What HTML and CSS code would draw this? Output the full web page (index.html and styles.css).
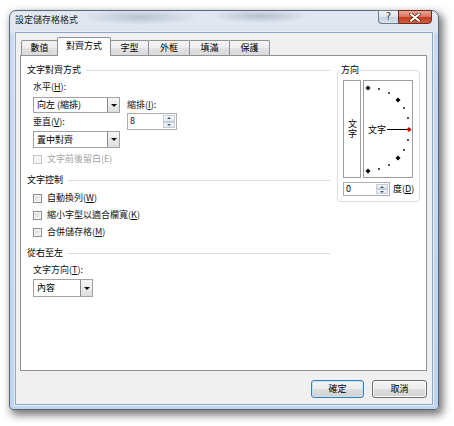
FILE: index.html
```html
<!DOCTYPE html>
<html lang="zh-Hant">
<head>
<meta charset="utf-8">
<title>設定儲存格格式</title>
<link rel="stylesheet" href="styles.css">
</head>
<body>
<div class="window">
  <div class="titlebar">
    <div class="title">設定儲存格格式</div>
    <div class="caption">
      <div class="cap help">?</div>
      <div class="cap close"><svg width="12" height="9" viewBox="0 0 12 9"><path d="M2 1.2 L10 7.8 M10 1.2 L2 7.8" stroke="#5a2418" stroke-width="3.4" stroke-linecap="round"/><path d="M2 1.2 L10 7.8 M10 1.2 L2 7.8" stroke="#fff" stroke-width="2" stroke-linecap="round"/></svg></div>
    </div>
  </div>
  <div class="client">
    <div class="tabs">
      <div class="tab t1">數值</div>
      <div class="tab sel">對齊方式</div>
      <div class="tab t3">字型</div>
      <div class="tab t4">外框</div>
      <div class="tab t5">填滿</div>
      <div class="tab t6">保護</div>
    </div>
    <div class="panel">
      <div class="left">
        <div class="group-title"><span>文字對齊方式</span><i class="rule"></i></div>
        <div class="align-row">
          <div class="align-col">
            <div class="label">水平(<u>H</u>):</div>
            <div class="combo c1"><span class="ctext">向左 (縮排)</span><span class="drop"></span></div>
            <div class="label l2">垂直(<u>V</u>):</div>
            <div class="combo c2"><span class="ctext">置中對齊</span><span class="drop"></span></div>
          </div>
          <div class="indent-col">
            <div class="label">縮排(<u>I</u>):</div>
            <div class="spin sp-indent"><span class="sval">8</span><span class="spbtns"><i class="up"></i><i class="down"></i></span></div>
          </div>
        </div>
        <div class="check disabled first"><i class="box"></i>文字前後留白(E)</div>

        <div class="group-title sec"><span>文字控制</span><i class="rule"></i></div>
        <div class="check c-a"><i class="box"></i>自動換列(<u>W</u>)</div>
        <div class="check"><i class="box"></i>縮小字型以適合欄寬(<u>K</u>)</div>
        <div class="check"><i class="box"></i>合併儲存格(<u>M</u>)</div>

        <div class="group-title sec"><span>從右至左</span><i class="rule"></i></div>
        <div class="label dir-label">文字方向(<u>T</u>):</div>
        <div class="combo c3"><span class="ctext">內容</span><span class="drop"></span></div>
      </div>

      <fieldset class="orient">
        <legend>方向</legend>
        <div class="orient-row">
          <div class="vbox"><span class="vtext">文字</span></div>
          <div class="dial">
            <svg width="48" height="96" viewBox="0 0 48 96">
              <polygon points="4,4.5 6.5,7 4,9.5 1.5,7" fill="#000"/>
              <circle cx="15" cy="8" r="0.9" fill="#000"/>
              <circle cx="25" cy="12" r="0.9" fill="#000"/>
              <polygon points="34,16.5 36.5,19 34,21.5 31.5,19" fill="#000"/>
              <circle cx="40" cy="27" r="0.9" fill="#000"/>
              <circle cx="44" cy="37" r="0.9" fill="#000"/>
              <text x="4" y="52" font-size="9" font-family="Noto Sans CJK TC, sans-serif" fill="#000">文字</text>
              <line x1="23" y1="48.5" x2="43" y2="48.5" stroke="#000" stroke-width="1"/>
              <polygon points="45,46 47.5,48.5 45,51 42.5,48.5" fill="#c80000"/>
              <circle cx="44" cy="59" r="0.9" fill="#000"/>
              <circle cx="40" cy="69" r="0.9" fill="#000"/>
              <polygon points="34,74.5 36.5,77 34,79.5 31.5,77" fill="#000"/>
              <circle cx="25" cy="84" r="0.9" fill="#000"/>
              <circle cx="15" cy="88" r="0.9" fill="#000"/>
              <polygon points="4,87.5 6.5,90 4,92.5 1.5,90" fill="#000"/>
            </svg>
          </div>
        </div>
        <div class="deg-row">
          <div class="spin sp-deg"><span class="sval">0</span><span class="spbtns"><i class="up"></i><i class="down"></i></span></div>
          <span class="deg">度(<u>D</u>)</span>
        </div>
      </fieldset>
    </div>
    <div class="buttons">
      <div class="btn ok">確定</div>
      <div class="btn cancel">取消</div>
    </div>
  </div>
</div>
</body>
</html>
```
FILE: styles.css
```css
html, body {
  margin: 0;
  padding: 0;
  background: #ffffff;
}
body {
  font-family: "Noto Sans CJK TC", "Noto Sans CJK SC", sans-serif;
  font-size: 9px;
  color: #000;
  width: 454px;
  height: 426px;
  overflow: hidden;
}
u { text-decoration: underline; text-underline-offset: 1px; }

.window {
  width: 430px;
  height: 400px;
  margin: 10px 0 0 9px;
  box-sizing: border-box;
  border: 1px solid #59677a;
  border-radius: 7px 7px 4px 4px;
  padding: 0 5px 4px 5px;
  background:
    radial-gradient(ellipse 60px 8px at 130px 6px, rgba(110,125,150,.35), rgba(110,125,150,0)),
    radial-gradient(ellipse 50px 7px at 250px 5px, rgba(100,115,140,.35), rgba(100,115,140,0)),
    linear-gradient(#e2e8f0 0, #dde5ef 21px, #c9dbf1 23px, #bfd4ee 100%);
  box-shadow: 3px 4px 8px 1px rgba(0,0,0,.55);
  display: flex;
  flex-direction: column;
}

.titlebar {
  height: 21px;
  display: flex;
  justify-content: space-between;
  align-items: flex-start;
  flex: none;
}
.title {
  padding-top: 3px;
  line-height: 12px;
  color: #1a1a1a;
}
.caption {
  display: flex;
  margin-top: -1px;
  margin-right: 1px;
}
.cap {
  height: 14px;
  box-sizing: border-box;
  display: flex;
  align-items: center;
  justify-content: center;
}
.help {
  width: 20px;
  border: 1px solid #6f7b8c;
  border-right: none;
  border-radius: 0 0 0 4px;
  background: linear-gradient(#eef2f7 0, #dfe5ed 50%, #c9d2de 50%, #d8e0ea 100%);
  color: #3a3f48;
  font-family: "DejaVu Sans", sans-serif;
  font-size: 10px;
  line-height: 12px;
}
.close {
  width: 34px;
  border: 1px solid #6e2a1d;
  border-radius: 0 0 4px 0;
  background: linear-gradient(#eaa696 0, #d8735c 48%, #c23b1f 52%, #d35c40 100%);
}

.client {
  flex: 1;
  background: #f0f0f0;
  border: 1px solid #8aa6c9;
  box-shadow: 0 0 0 1px #e6effa;
  padding: 4px 5px 0 4px;
  display: flex;
  flex-direction: column;
}

.tabs {
  display: flex;
  align-items: flex-end;
  height: 18px;
  padding-left: 1px;
  position: relative;
  z-index: 1;
  flex: none;
}
.tab {
  height: 15px;
  box-sizing: border-box;
  border: 1px solid #8e9199;
  border-bottom: none;
  margin-left: -1px;
  background: linear-gradient(#f5f5f5 0, #ececec 50%, #e2e2e2 51%, #dadada 100%);
  text-align: center;
  line-height: 14px;
  border-radius: 2px 2px 0 0;
}
.tab.t1 { margin-left: 0; width: 37px; }
.tab.sel {
  width: 54px;
  height: 19px;
  margin-bottom: -1px;
  background: #fff;
  line-height: 16px;
  position: relative;
  z-index: 2;
}
.tab.t3 { width: 39px; }
.tab.t4 { width: 42px; }
.tab.t5 { width: 41px; }
.tab.t6 { width: 41px; }

.panel {
  width: 407px;
  height: 316px;
  box-sizing: border-box;
  background: #fff;
  border: 1px solid #8e9199;
  display: flex;
  align-items: flex-start;
  padding: 8px 0 0 6px;
  flex: none;
}

.left {
  width: 303px;
  display: flex;
  flex-direction: column;
}
.group-title {
  display: flex;
  align-items: center;
  height: 12px;
  line-height: 12px;
}
.group-title.sec { margin-top: 9px; }
.rule {
  flex: 1;
  height: 1px;
  background: #d5dfe5;
  margin-left: 5px;
}
.label {
  height: 12px;
  line-height: 12px;
  color: #111;
}
.align-row {
  display: flex;
  margin-top: 5px;
  padding-left: 6px;
  gap: 7px;
}
.align-col {
  width: 87px;
  display: flex;
  flex-direction: column;
}
.indent-col {
  margin-top: 18px;
  display: flex;
  flex-direction: column;
}

.combo {
  display: flex;
  box-sizing: border-box;
  border: 1px solid #a2a2a2;
  background: #fff;
}
.combo .ctext {
  flex: 1;
  padding-left: 3px;
  line-height: 14px;
  white-space: nowrap;
  overflow: hidden;
}
.combo.c1 { margin-top: 4px; height: 16px; }
.label.l2 { margin-top: 3px; }
.combo.c2 { margin-top: 3px; height: 17px; }
.combo.c2 .ctext, .combo.c3 .ctext { line-height: 15px; }
.combo.c3 { margin: 3px 0 0 6px; width: 60px; height: 18px; }
.drop {
  width: 11px;
  border-left: 1px solid #8a8a8a;
  background: linear-gradient(#f6f6f6, #dedede);
  display: flex;
  align-items: center;
  justify-content: center;
}
.drop::after {
  content: "";
  width: 0;
  height: 0;
  border-left: 3px solid transparent;
  border-right: 3px solid transparent;
  border-top: 3px solid #111;
}

.spin {
  display: flex;
  box-sizing: border-box;
  border: 1px solid #abadb3;
  background: #fff;
  flex: none;
}
.sp-indent { margin-top: 2px; width: 50px; height: 17px; }
.sp-deg { width: 47px; height: 14px; }
.sval {
  flex: 1;
  padding-left: 2px;
  line-height: 14px;
}
.sp-deg .sval { line-height: 12px; }
.spbtns {
  width: 12px;
  display: flex;
  flex-direction: column;
  padding: 1px 1px 1px 0;
}
.spbtns i {
  flex: 1;
  box-sizing: border-box;
  border: 1px solid #c6ccd6;
  background: linear-gradient(#f8fafd, #dfe6ef);
  display: flex;
  align-items: center;
  justify-content: center;
}
.spbtns i.up::after {
  content: "";
  border-left: 2px solid transparent;
  border-right: 2px solid transparent;
  border-bottom: 2px solid #3d5a86;
}
.spbtns i.down::after {
  content: "";
  border-left: 2px solid transparent;
  border-right: 2px solid transparent;
  border-top: 2px solid #3d5a86;
}

.check {
  display: flex;
  align-items: center;
  height: 12px;
  line-height: 12px;
  padding-left: 6px;
  margin-top: 5px;
  color: #111;
}
.check.first { margin-top: 5px; }
.check.c-a { margin-top: 6px; }
.check .box {
  width: 9px;
  height: 9px;
  box-sizing: border-box;
  border: 1px solid #8e8f8f;
  background: linear-gradient(135deg, #d8d8d8, #f7f7f7);
  box-shadow: inset 0 0 0 1px #f4f4f4;
  margin-right: 5px;
}
.check.disabled { color: #a3a3a3; }
.check.disabled .box {
  border-color: #c6c6c6;
  background: #f4f4f4;
}
.dir-label { margin-top: 5px; padding-left: 6px; }

.orient {
  margin: 0 0 0 7px;
  width: 83px;
  height: 138px;
  box-sizing: border-box;
  border: 1px solid #d5dfe5;
  border-radius: 3px;
  padding: 0 2px 0 5px;
  min-width: 0;
}
.orient legend {
  padding: 0 1px;
  margin-left: -3px;
  line-height: 12px;
  font-size: 9px;
}
.orient-row {
  display: flex;
  gap: 2px;
  margin-top: 4px;
}
.vbox {
  width: 18px;
  height: 98px;
  box-sizing: border-box;
  border: 1px solid #9c9c9c;
  display: flex;
  align-items: center;
  justify-content: center;
}
.vtext {
  writing-mode: vertical-rl;
  text-orientation: upright;
  letter-spacing: 1px;
  line-height: 12px;
}
.dial {
  width: 50px;
  height: 98px;
  box-sizing: border-box;
  border: 1px solid #9c9c9c;
}
.dial svg { display: block; }
.deg-row {
  display: flex;
  align-items: center;
  margin-top: 4px;
  white-space: nowrap;
}
.deg {
  margin-left: 3px;
  line-height: 14px;
  white-space: nowrap;
}

.buttons {
  width: 407px;
  display: flex;
  justify-content: flex-end;
  gap: 8px;
  margin-top: 9px;
}
.btn {
  height: 18px;
  box-sizing: border-box;
  border: 1px solid #707070;
  border-radius: 3px;
  background: linear-gradient(#f3f3f3 0, #ececec 50%, #dedede 50%, #d1d1d1 100%);
  box-shadow: inset 0 0 0 1px #fbfbfb;
  text-align: center;
  line-height: 16px;
}
.btn.ok {
  width: 53px;
  border-color: #3c7fb1;
  box-shadow: inset 0 0 0 1px #bfe3f8;
}
.btn.cancel { width: 55px; }
```
